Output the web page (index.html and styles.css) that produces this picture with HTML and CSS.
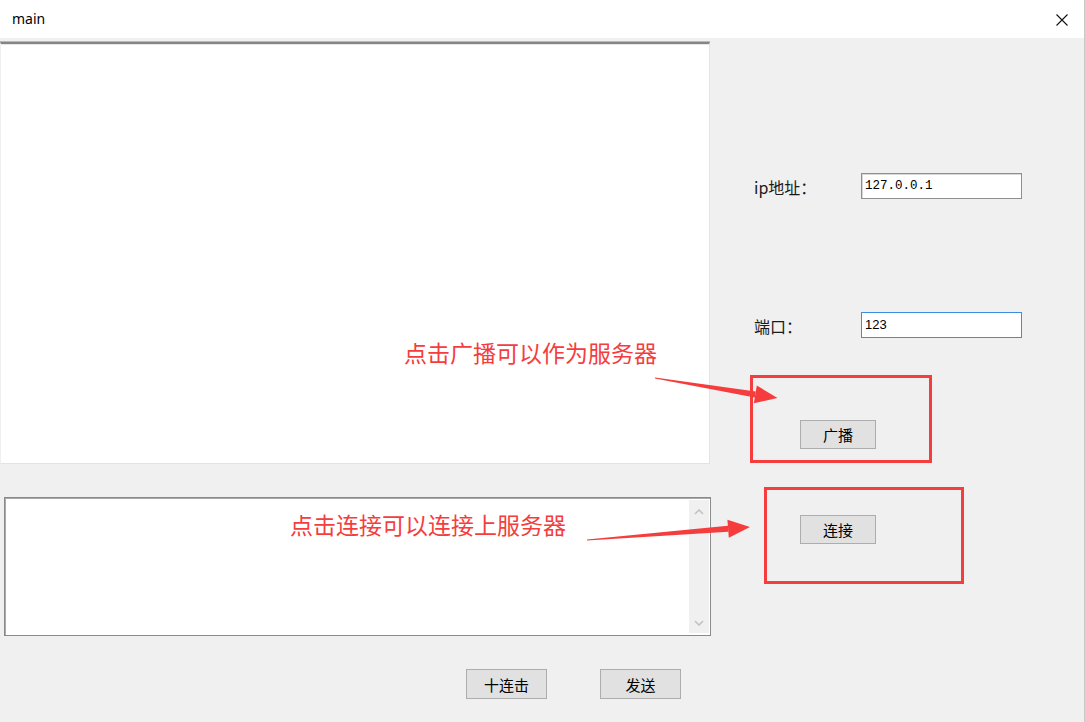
FILE: index.html
```html
<!DOCTYPE html>
<html lang="zh-CN">
<head>
<meta charset="utf-8">
<title>main</title>
<link rel="stylesheet" href="styles.css">
</head>
<body>
<div class="window">
  <div class="titlebar">
    <span class="title">main</span>
    <svg class="close" width="12" height="12" viewBox="0 0 12 12"><path d="M0.5 0.5 L11.5 11.5 M11.5 0.5 L0.5 11.5" stroke="#111" stroke-width="1.1" fill="none"/></svg>
  </div>
  <div class="client">
    <div class="left">
      <div class="log"></div>
      <div class="edit">
        <div class="edit-text"></div>
        <div class="vscroll">
          <svg width="10" height="6" viewBox="0 0 10 6"><path d="M1 5 L5 1 L9 5" stroke="#c2c2c2" stroke-width="1.6" fill="none"/></svg>
          <svg width="10" height="6" viewBox="0 0 10 6"><path d="M1 1 L5 5 L9 1" stroke="#c2c2c2" stroke-width="1.6" fill="none"/></svg>
        </div>
      </div>
      <div class="bottom-buttons">
        <button class="btn btn-wide">十连击</button>
        <button class="btn btn-wide btn-send">发送</button>
      </div>
    </div>
    <div class="right">
      <div class="field field-ip">
        <span class="label">ip地址：</span>
        <div class="input mono">127.0.0.1</div>
      </div>
      <div class="field field-port">
        <span class="label">端口：</span>
        <div class="input focused">123</div>
      </div>
      <button class="btn btn-side btn-broadcast">广播</button>
      <button class="btn btn-side btn-connect">连接</button>
    </div>
  </div>

  <div class="note note-1">点击广播可以作为服务器</div>
  <div class="note note-2">点击连接可以连接上服务器</div>
  <div class="mark mark-1"></div>
  <div class="mark mark-2"></div>
  <svg class="arrows" width="1085" height="722" viewBox="0 0 1085 722">
    <polygon fill="#f53d3d" points="654.9,378.5 655.1,377.5 755.8,391.5 754.8,397.4"/>
    <polygon fill="#f53d3d" points="777.5,398 756.8,385.5 753.8,403.3"/>
    <polygon fill="#f53d3d" points="587,540.5 587,539.5 727.9,525.7 728.4,531.7"/>
    <polygon fill="#f53d3d" points="750,527 727.4,519.7 728.8,537.7"/>
  </svg>
</div>
</body>
</html>
```

FILE: styles.css
```css
* { box-sizing: border-box; }
html, body { margin: 0; padding: 0; }
body {
  width: 1085px;
  height: 722px;
  overflow: hidden;
  background: #f0f0f0;
  font-family: "Noto Sans CJK SC", "Noto Sans", sans-serif;
}
.window {
  position: relative;
  width: 1085px;
  height: 722px;
  background: #f0f0f0;
  border-right: 1px solid #c9c9c9;
  display: flex;
  flex-direction: column;
}
.titlebar {
  height: 38px;
  background: #ffffff;
  display: flex;
  align-items: center;
  padding-left: 12px;
  padding-right: 16px;
  flex: none;
}
.title {
  font-family: "Noto Sans", "Open Sans", sans-serif;
  font-size: 14px;
  color: #000;
  flex: 1;
  margin-top: -1px;
}
.close { display: block; margin-top: 1px; }
.client {
  flex: 1;
  display: flex;
}
.left {
  width: 710px;
  flex: none;
  display: flex;
  flex-direction: column;
}
.log {
  margin-top: 4px;
  height: 422px;
  width: 710px;
  background: #fff;
  border-top: 2px solid #858585;
  border-right: 1px solid #e3e3e3;
  border-bottom: 1px solid #e3e3e3;
  border-left: 1px solid #f0f0f0;
  box-shadow: 0 -1px 0 #b9b9b9, inset 0 1px 0 #e6e6e6;
}
.edit {
  margin-top: 33px;
  margin-left: 4px;
  width: 707px;
  height: 139px;
  background: #fff;
  border: 1px solid #8a8a8a;
  box-shadow: inset 1px 1px 0 #a9a9a9;
  display: flex;
}
.edit-text { flex: 1; }
.vscroll {
  width: 20px;
  margin: 2px 1px 2px 0;
  background: #f0f0f0;
  display: flex;
  flex-direction: column;
  justify-content: space-between;
  align-items: center;
  padding: 9px 0 7px;
}
.vscroll svg { display: block; }
.bottom-buttons {
  margin-top: 33px;
  display: flex;
  padding-left: 466px;
}
.btn {
  font-family: "Noto Sans CJK SC", sans-serif;
  font-size: 15px;
  line-height: 1;
  color: #000;
  background: #e1e1e1;
  border: 1px solid #adadad;
  padding: 0;
  margin: 0;
  display: flex;
  align-items: center;
  justify-content: center;
}
.btn-wide { width: 81px; height: 30px; }
.btn-send { margin-left: 53px; }
.right {
  flex: 1;
  display: flex;
  flex-direction: column;
  padding-left: 44px;
}
.field {
  display: flex;
  align-items: center;
  height: 26px;
}
.field-ip { margin-top: 135px; }
.field-port { margin-top: 113px; }
.label {
  width: 107px;
  font-family: "Noto Sans CJK SC", sans-serif;
  font-size: 16px;
  color: #1a1a1a;
  line-height: 1;
  margin-top: 2px;
}
.input {
  width: 161px;
  height: 26px;
  background: #fff;
  border: 1px solid #7a7a7a;
  box-shadow: inset 1px 1px 0 #d7d7d7;
  font-family: "Liberation Sans", sans-serif;
  font-size: 13px;
  color: #000;
  padding: 3px 0 0 3px;
  line-height: 18px;
}
.input.mono {
  font-family: "Liberation Mono", monospace;
  font-size: 12.5px;
  border-color: #8f8f8f;
}
.input.focused {
  border-color: #3b8ee0;
  box-shadow: none;
}
.btn-side { width: 76px; height: 29px; margin-left: 46px; }
.btn-broadcast { margin-top: 82px; }
.btn-connect { margin-top: 66px; }

.note {
  position: absolute;
  font-family: "Noto Sans CJK SC", sans-serif;
  font-size: 23px;
  line-height: 23px;
  color: #f53d3d;
  white-space: nowrap;
}
.note-1 { left: 404px; top: 341px; }
.note-2 { left: 290px; top: 513px; }
.mark {
  position: absolute;
  border: 3px solid #f53d3d;
}
.mark-1 { left: 750px; top: 375px; width: 182px; height: 88px; }
.mark-2 { left: 764px; top: 487px; width: 200px; height: 97px; }
.arrows {
  position: absolute;
  left: 0;
  top: 0;
  pointer-events: none;
}
```
